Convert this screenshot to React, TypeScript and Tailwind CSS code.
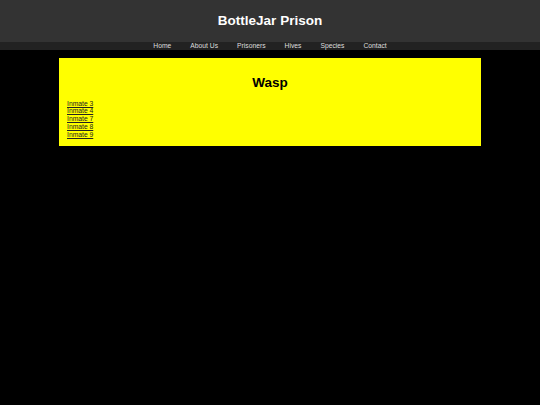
import React from "react";

export default function App() {
  const nav = ["Home", "About Us", "Prisoners", "Hives", "Species", "Contact"];
  const inmates = ["Inmate 3", "Inmate 4", "Inmate 7", "Inmate 8", "Inmate 9"];
  return (
    <div className="min-h-[405px] w-[540px] bg-black font-['Liberation_Sans',Arial,sans-serif]">
      <header className="flex h-[42px] items-center justify-center bg-[#333333]">
        <h1 className="text-[13.5px] font-bold leading-[16px] text-white">BottleJar Prison</h1>
      </header>
      <nav className="flex h-[8px] items-center justify-center gap-[19px] bg-[#222222] text-[6.75px] leading-[8px] text-[#dddddd]">
        {nav.map((n) => (
          <a key={n} href="#" className="text-[#dddddd] no-underline">
            {n}
          </a>
        ))}
      </nav>
      <main className="mx-[59px] mt-[8px] bg-[#ffff00] px-[8px] pb-[8px] pt-[8px]">
        <h2 className="my-[9px] text-center text-[13.5px] font-bold leading-[15.5px] text-black">Wasp</h2>
        <ul className="flex flex-col text-[6.75px] leading-[7.75px]">
          {inmates.map((i) => (
            <li key={i}>
              <a href="#" className="text-[#222222] underline">
                {i}
              </a>
            </li>
          ))}
        </ul>
      </main>
    </div>
  );
}
